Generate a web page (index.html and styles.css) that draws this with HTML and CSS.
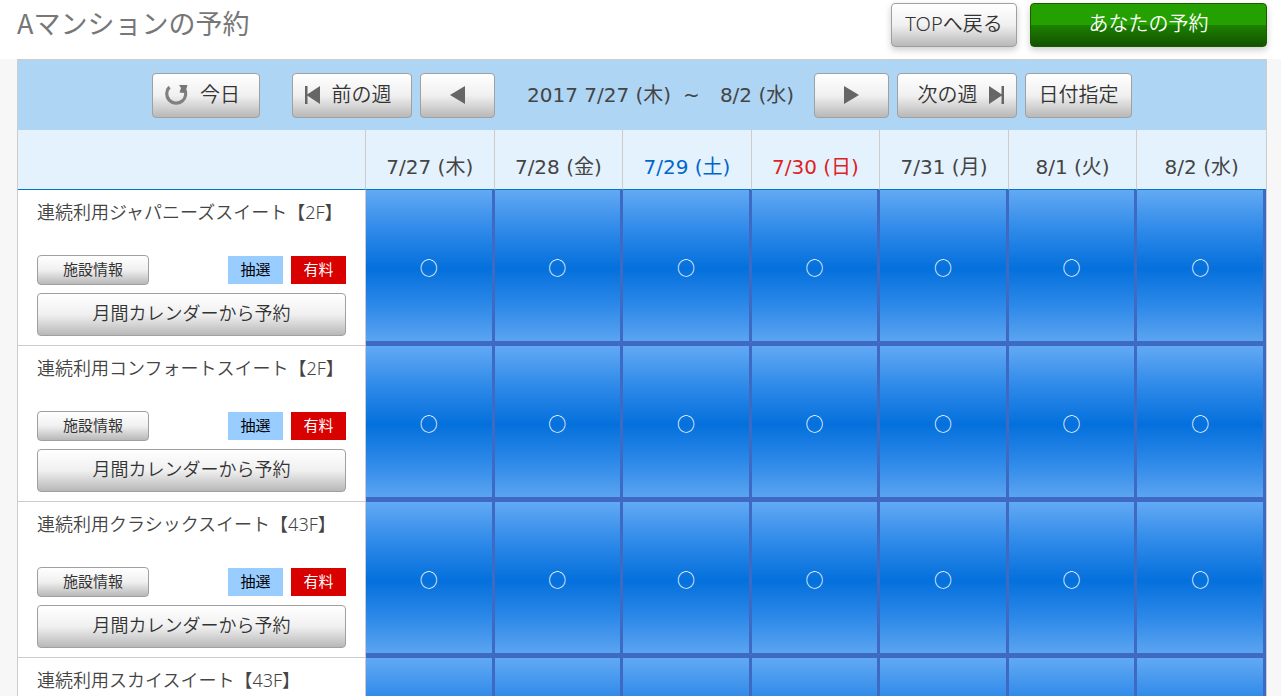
FILE: index.html
```html
<!DOCTYPE html>
<html lang="ja">
<head>
<meta charset="utf-8">
<meta name="viewport" content="width=device-width, initial-scale=1">
<title>Aマンションの予約</title>
<link rel="stylesheet" href="styles.css">
</head>
<body>
<header class="topbar">
  <h1 class="title">Aマンションの予約</h1>
  <div class="actions">
    <button type="button" class="btn btn-back">TOPへ戻る</button>
    <button type="button" class="btn btn-mine">あなたの予約</button>
  </div>
</header>
<main class="panel">
  <nav class="weeknav">
    <button type="button" class="btn nav-today">
      <svg class="icon" width="24" height="22" viewBox="0 0 24 22" aria-hidden="true"><path d="M5.500 3A9.500 9.500 0 1 0 19.800 4" fill="none" stroke="#808080" stroke-width="3.200"/><path d="M15 1H23.500L22.500 4.500L20.500 9L15.500 8.500L17 4Z" fill="#777"/></svg>
      <span>今日</span>
    </button>
    <button type="button" class="btn nav-week">
      <svg class="icon" width="16" height="18" viewBox="0 0 16 18" aria-hidden="true"><path d="M0 0H2.500V8.200L15 0V18L2.500 9.800V18H0Z" fill="#666"/></svg>
      <span>前の週</span>
    </button>
    <button type="button" class="btn nav-day" aria-label="前の日">
      <svg class="icon" width="16" height="18" viewBox="0 0 16 18" aria-hidden="true"><path d="M15 0V18L0 9Z" fill="#666"/></svg>
    </button>
    <p class="range"><span>2017 7/27 (木)</span><span class="tilde">~</span><span>8/2 (水)</span></p>
    <button type="button" class="btn nav-day" aria-label="次の日">
      <svg class="icon" width="16" height="18" viewBox="0 0 16 18" aria-hidden="true"><path d="M0 0V18L15 9Z" fill="#666"/></svg>
    </button>
    <button type="button" class="btn nav-week nav-next">
      <span>次の週</span>
      <svg class="icon" width="16" height="18" viewBox="0 0 16 18" aria-hidden="true"><path d="M15 0H12.500V8.200L0 0V18L12.500 9.800V18H15Z" fill="#666"/></svg>
    </button>
    <button type="button" class="btn nav-date">日付指定</button>
  </nav>
  <table class="schedule">
    <colgroup><col class="col-room"><col><col><col><col><col><col><col></colgroup>
    <thead>
      <tr><td></td><th scope="col">7/27 (木)</th><th scope="col">7/28 (金)</th><th scope="col" class="sat">7/29 (土)</th><th scope="col" class="sun">7/30 (日)</th><th scope="col">7/31 (月)</th><th scope="col">8/1 (火)</th><th scope="col">8/2 (水)</th></tr>
    </thead>
    <tbody>
      <tr>
        <th scope="row" class="room"><p class="name">連続利用ジャパニーズスイート【2F】</p>
          <div class="meta"><button type="button" class="btn btn-info">施設情報</button><span class="tag tag-lot">抽選</span><span class="tag tag-fee">有料</span></div>
          <button type="button" class="btn btn-month">月間カレンダーから予約</button></th>
        <td class="slot"><button type="button">○</button></td><td class="slot"><button type="button">○</button></td><td class="slot"><button type="button">○</button></td><td class="slot"><button type="button">○</button></td><td class="slot"><button type="button">○</button></td><td class="slot"><button type="button">○</button></td><td class="slot"><button type="button">○</button></td>
      </tr>
      <tr>
        <th scope="row" class="room"><p class="name">連続利用コンフォートスイート【2F】</p>
          <div class="meta"><button type="button" class="btn btn-info">施設情報</button><span class="tag tag-lot">抽選</span><span class="tag tag-fee">有料</span></div>
          <button type="button" class="btn btn-month">月間カレンダーから予約</button></th>
        <td class="slot"><button type="button">○</button></td><td class="slot"><button type="button">○</button></td><td class="slot"><button type="button">○</button></td><td class="slot"><button type="button">○</button></td><td class="slot"><button type="button">○</button></td><td class="slot"><button type="button">○</button></td><td class="slot"><button type="button">○</button></td>
      </tr>
      <tr>
        <th scope="row" class="room"><p class="name">連続利用クラシックスイート【43F】</p>
          <div class="meta"><button type="button" class="btn btn-info">施設情報</button><span class="tag tag-lot">抽選</span><span class="tag tag-fee">有料</span></div>
          <button type="button" class="btn btn-month">月間カレンダーから予約</button></th>
        <td class="slot"><button type="button">○</button></td><td class="slot"><button type="button">○</button></td><td class="slot"><button type="button">○</button></td><td class="slot"><button type="button">○</button></td><td class="slot"><button type="button">○</button></td><td class="slot"><button type="button">○</button></td><td class="slot"><button type="button">○</button></td>
      </tr>
      <tr>
        <th scope="row" class="room"><p class="name">連続利用スカイスイート【43F】</p></th>
        <td class="slot"></td><td class="slot"></td><td class="slot"></td><td class="slot"></td><td class="slot"></td><td class="slot"></td><td class="slot"></td>
      </tr>
    </tbody>
  </table>
</main>
</body>
</html>
```
FILE: styles.css
```css
* {
  box-sizing: border-box;
}

body {
  display: flex;
  flex-direction: column;
  height: 100vh;
  margin: 0;
  overflow: hidden;
  background: #f7f7f7;
  color: #444;
  font-family: "Noto Sans", "Noto Sans CJK JP", sans-serif;
  font-size: 20px;
  font-weight: 350;
  line-height: 24px;
}

p,
h1 {
  margin: 0;
}

.topbar {
  display: flex;
  flex-shrink: 0;
  align-items: flex-start;
  justify-content: space-between;
  padding: 3px 14px 12px 17px;
  background: #fff;
}

.title {
  color: #777;
  font-family: "Noto Sans CJK JP", sans-serif;
  font-size: 27px;
  font-weight: 400;
  line-height: 40px;
}

.actions {
  display: flex;
  gap: 13px;
}

.btn {
  height: 45px;
  padding: 0 0 1px;
  border: 1px solid #a0a0a0;
  border-radius: 4px;
  background: linear-gradient(#fff 0%, #f0f0f0 50%, #b8b8b8 100%);
  color: #333;
  font: inherit;
}

.btn-back,
.btn-mine {
  height: 44px;
  padding-bottom: 2px;
  box-shadow: 0 3px 7px rgba(0, 0, 0, 0.2);
}

.btn-back {
  width: 126px;
}

.btn-mine {
  width: 237px;
  border-color: #1c5a00;
  background: linear-gradient(#24a000 0%, #24a000 50%, #1c8200 50%, #145200 100%);
  color: #fff;
}

.panel {
  flex: 1;
  min-height: 0;
  margin: 0 14px 0 17px;
  overflow: hidden;
  border: 1px solid #ccc;
  border-bottom: 0;
}

.weeknav {
  display: flex;
  align-items: center;
  justify-content: center;
  gap: 8px;
  height: 70px;
  background: #afd5f5;
}

.weeknav .btn {
  display: flex;
  align-items: center;
  justify-content: center;
  padding-bottom: 0;
}

.icon {
  display: block;
}

.weeknav .nav-today {
  gap: 12px;
  width: 108px;
  margin-right: 24px;
  padding-right: 8px;
}

.weeknav .nav-week {
  gap: 11px;
  width: 120px;
  padding-right: 8px;
}

.weeknav .nav-next {
  padding: 0 0 0 8px;
}

.nav-day {
  width: 75px;
}

.nav-date {
  width: 107px;
}

.range {
  display: flex;
  justify-content: center;
  width: 303px;
  padding-left: 12px;
  font-family: "DejaVu Sans", "Noto Sans CJK JP", sans-serif;
  font-weight: 400;
  white-space: nowrap;
}

.tilde {
  padding: 0 20px 0 12px;
}

.schedule {
  width: 100%;
  table-layout: fixed;
  border-spacing: 0;
}

.col-room {
  width: 348px;
}

.schedule thead th,
.schedule thead td {
  height: 60px;
  padding: 14px 0 0;
  border-right: 1px solid #ccc;
  border-bottom: 1px solid #0077cc;
  background: #e4f2fd;
  font-family: "DejaVu Sans", "Noto Sans CJK JP", sans-serif;
  font-weight: 400;
}

.schedule thead th:last-child {
  border-right: 0;
}

.schedule .sat {
  color: #06c;
}

.schedule .sun {
  color: #d22;
}

.room {
  height: 156px;
  padding: 10px 19px 9px;
  border-right: 1px solid #ccc;
  border-bottom: 1px solid #ccc;
  background: #fff;
  font-size: 18px;
  font-weight: 350;
  text-align: left;
  vertical-align: top;
}

.name {
  white-space: nowrap;
}

.meta {
  display: flex;
  gap: 8px;
  align-items: center;
  margin: 31px 0 8px;
  font-size: 15px;
  font-weight: 400;
}

.btn-info {
  width: 112px;
  height: 30px;
  margin-right: auto;
  padding-bottom: 2px;
}

.tag {
  width: 55px;
  height: 28px;
  line-height: 26px;
  text-align: center;
}

.tag-lot {
  background: #9cf;
  color: #000;
}

.tag-fee {
  background: #d90000;
  color: #fff;
}

.btn-month {
  display: block;
  width: 100%;
  height: 43px;
  padding-bottom: 4px;
}

.slot {
  height: 156px;
  padding: 0;
  border-right: 3px solid #3f6ac4;
  border-bottom: 5px solid #3f6ac4;
  background: linear-gradient(#62a9f4 0%, #2c88e8 28%, #0470dc 52%, #2c88e8 76%, #5ba4f1 100%);
  background-clip: padding-box;
}

.slot button {
  display: block;
  width: 100%;
  height: 151px;
  padding: 2px 0 0;
  border: 0;
  background: none;
  color: #fff;
  font-family: "Noto Sans CJK JP", sans-serif;
  font-size: 18px;
  font-weight: 400;
}
```
